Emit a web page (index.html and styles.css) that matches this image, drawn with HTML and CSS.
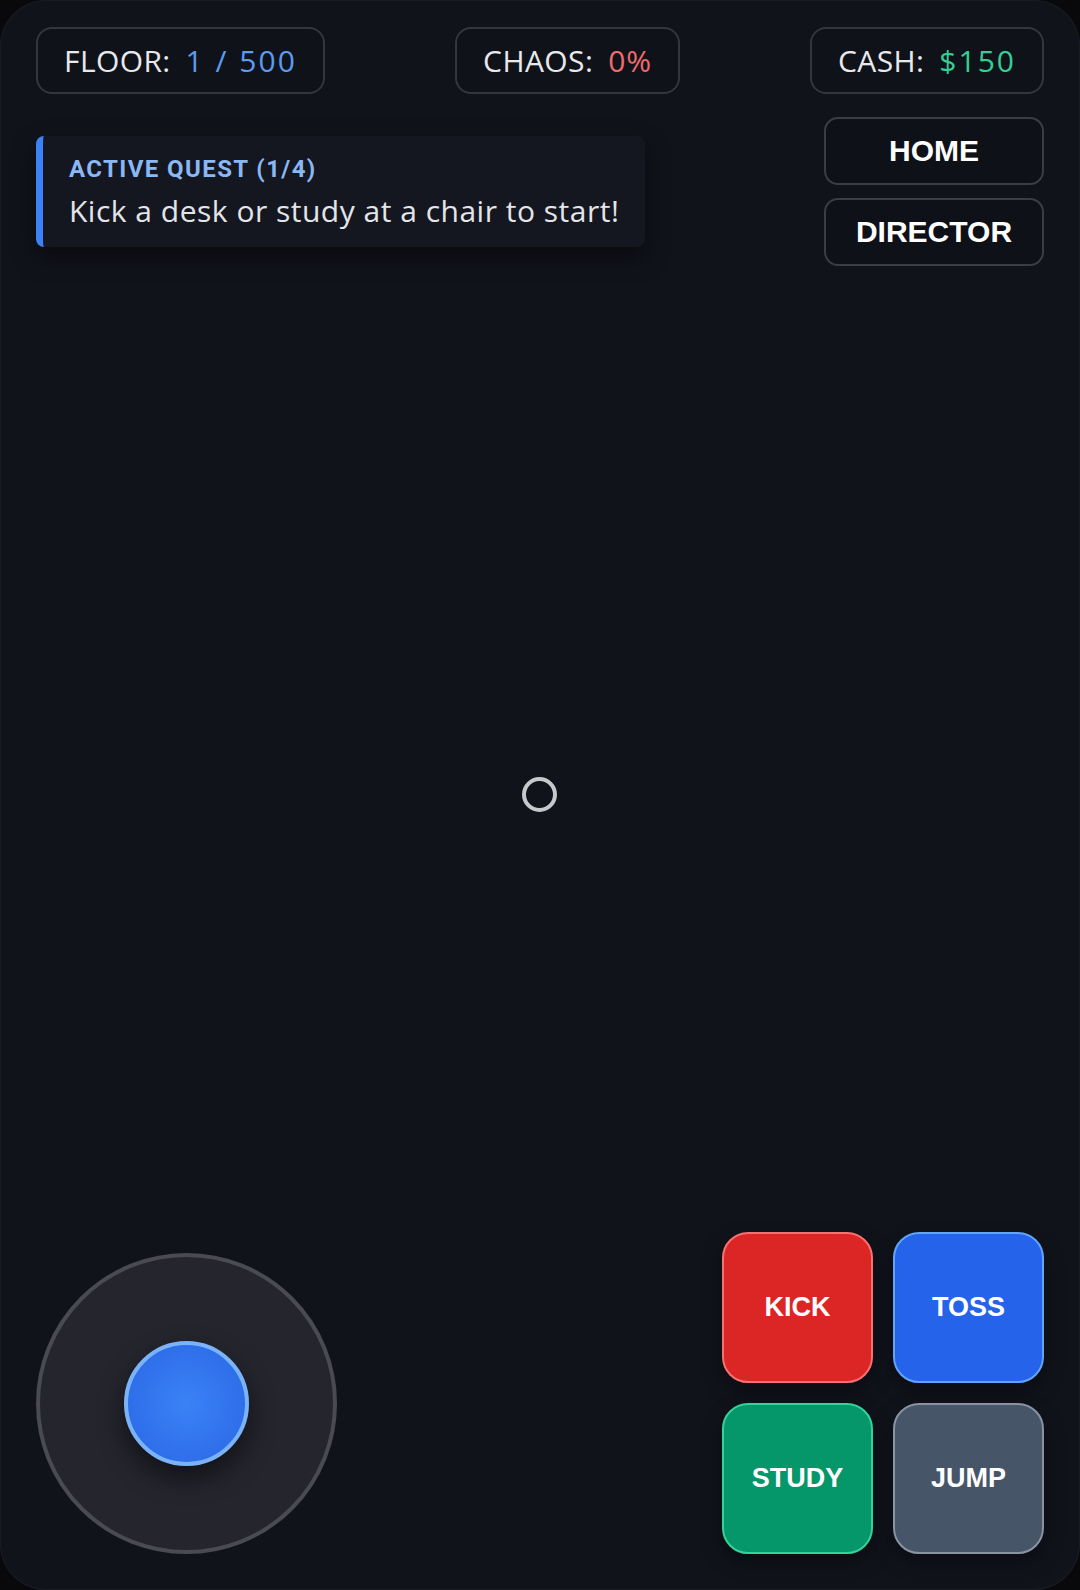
FILE: index.html
```html
<!DOCTYPE html>
<html lang="en">
<head>
    <meta charset="UTF-8" />
    <meta name="viewport" content="width=device-width, initial-scale=1.0" />
    <title>Office Chaos</title>
    <link rel="stylesheet" href="styles.css">
</head>
<body>
    <div id="game">
        <div class="hud-top">
            <div class="stat">FLOOR:<span class="val floor">1 / 500</span></div>
            <div class="stat">CHAOS:<span class="val chaos">0%</span></div>
            <div class="stat">CASH:<span class="val cash">$150</span></div>
        </div>

        <div class="hud-mid">
            <div id="quest">
                <div class="quest-title">ACTIVE QUEST (1/4)</div>
                <div class="quest-text">Kick a desk or study at a chair to start!</div>
            </div>
            <div class="menu">
                <button class="menu-btn">HOME</button>
                <button class="menu-btn">DIRECTOR</button>
            </div>
        </div>

        <div class="crosshair"></div>

        <div class="controls">
            <div id="joystick">
                <div class="knob"></div>
            </div>
            <div class="actions">
                <button class="act kick">KICK</button>
                <button class="act toss">TOSS</button>
                <button class="act study">STUDY</button>
                <button class="act jump">JUMP</button>
            </div>
        </div>
    </div>
</body>
</html>
```

FILE: styles.css
```css
body {
    margin: 0;
    padding: 0;
    background: #09090c;
}

#game {
    position: relative;
    box-sizing: border-box;
    width: 1080px;
    height: 1590px;
    padding: 27px 36px 36px;
    display: flex;
    flex-direction: column;
    background: #11131b;
    border-radius: 46px;
    box-shadow: inset 0 0 0 1px #1a1c24;
    font-family: "Open Sans", "Noto Sans", sans-serif;
    color: #e8e9ec;
}

.hud-top {
    display: flex;
    justify-content: space-between;
}

.stat {
    box-sizing: border-box;
    height: 67px;
    padding: 0 26px;
    display: flex;
    align-items: center;
    border: 2px solid #33363f;
    border-radius: 16px;
    background: #10121a;
    font-size: 30px;
    letter-spacing: 0.4px;
}

.val {
    margin-left: 15px;
    letter-spacing: 2px;
}

.floor { color: #5b9cf0; word-spacing: 1px; }
.chaos { color: #f06b6b; letter-spacing: 0.8px; }
.cash { color: #34cf93; }

.hud-mid {
    display: flex;
    justify-content: space-between;
    align-items: flex-start;
    margin-top: 23px;
}

#quest {
    box-sizing: border-box;
    width: 609px;
    height: 111px;
    margin-top: 19px;
    padding: 19px 26px 0 26px;
    border-left: 7px solid #3b82f6;
    border-radius: 8px;
    background: #141720;
    box-shadow: 0 10px 26px rgba(0, 0, 0, 0.45);
}

.quest-title {
    font-family: Roboto, sans-serif;
    font-size: 24px;
    font-weight: bold;
    letter-spacing: 1.4px;
    color: #8ab8f4;
}

.quest-text {
    margin-top: 7px;
    font-size: 30px;
    letter-spacing: 0.5px;
    white-space: nowrap;
    color: #e4e5e8;
}

.menu {
    display: flex;
    flex-direction: column;
    gap: 13px;
}

.menu-btn {
    box-sizing: border-box;
    width: 220px;
    height: 68px;
    border: 2px solid #3a3d46;
    border-radius: 14px;
    background: #0f1118;
    color: #fff;
    font-family: "Liberation Sans", Arial, sans-serif;
    font-size: 30px;
    font-weight: bold;
}

.crosshair {
    position: absolute;
    left: 522px;
    top: 777px;
    width: 27px;
    height: 27px;
    border: 4px solid #c7c8cc;
    border-radius: 50%;
}

.controls {
    margin-top: auto;
    display: flex;
    justify-content: space-between;
    align-items: flex-end;
}

#joystick {
    box-sizing: border-box;
    width: 301px;
    height: 301px;
    display: flex;
    align-items: center;
    justify-content: center;
    border: 4px solid #4a4b52;
    border-radius: 50%;
    background: #24252d;
}

.knob {
    box-sizing: border-box;
    width: 125px;
    height: 125px;
    border: 4px solid #7ab3fa;
    border-radius: 50%;
    background: radial-gradient(circle at 50% 50%, #3b82f6 0%, #2a66e4 100%);
    box-shadow: 0 12px 24px rgba(0, 0, 0, 0.5);
}

.actions {
    display: grid;
    grid-template-columns: 151px 151px;
    grid-auto-rows: 151px;
    gap: 20px;
}

.act {
    border: 2px solid;
    border-radius: 26px;
    color: #fff;
    font-family: "Liberation Sans", Arial, sans-serif;
    font-size: 27px;
    font-weight: bold;
    box-shadow: 0 8px 20px rgba(0, 0, 0, 0.35);
}

.kick { background: #dc2626; border-color: #f87171; }
.toss { background: #2563eb; border-color: #60a5fa; }
.study { background: #059669; border-color: #34d399; }
.jump { background: #475569; border-color: #8893a3; }
```
